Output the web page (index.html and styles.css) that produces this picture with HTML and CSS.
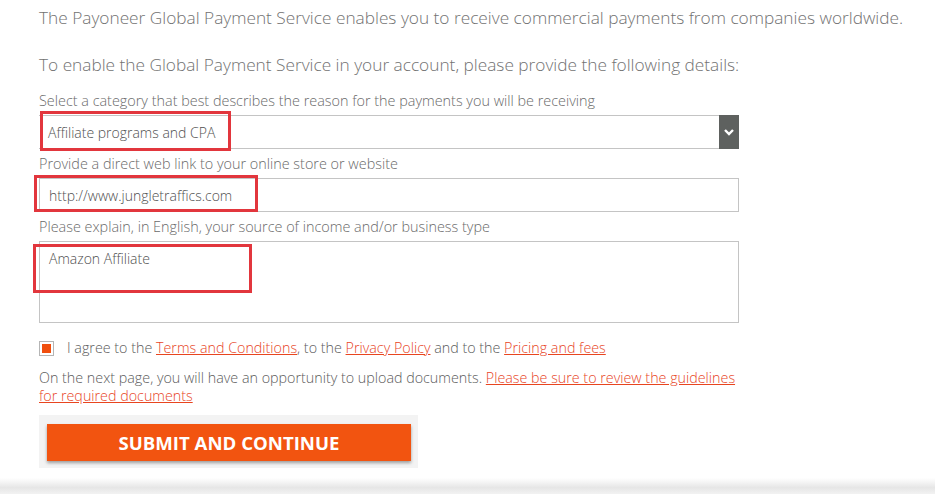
FILE: index.html
```html
<!DOCTYPE html>
<html lang="en">
<head>
  <meta charset="UTF-8">
  <title>Global Payment Service</title>
  <link rel="stylesheet" href="styles.css">
</head>
<body>
  <div class="page">
    <p class="lead">The Payoneer Global Payment Service enables you to receive commercial payments from companies worldwide.</p>
    <p class="lead second">To enable the Global Payment Service in your account, please provide the following details:</p>

    <form class="form">
      <label class="label">Select a category that best describes the reason for the payments you will be receiving</label>
      <div class="field select">
        <span class="value">Affiliate programs and CPA</span>
        <span class="arrow">
          <svg width="10" height="8" viewBox="0 0 10 8"><path d="M1 2 L5 6 L9 2" fill="none" stroke="#fff" stroke-width="2.4"/></svg>
        </span>
        <span class="mark mark-select"></span>
      </div>

      <label class="label">Provide a direct web link to your online store or website</label>
      <div class="field">
        <span class="value">http://www.jungletraffics.com</span>
        <span class="mark mark-link"></span>
      </div>

      <label class="label">Please explain, in English, your source of income and/or business type</label>
      <div class="field area">
        <span class="value">Amazon Affiliate</span>
        <span class="mark mark-area"></span>
      </div>

      <div class="agree">
        <span class="check"><span class="tick"></span></span>
        <span>I agree to the <a href="#">Terms and Conditions</a>, to the <a href="#">Privacy Policy</a> and to the <a href="#">Pricing and fees</a></span>
      </div>

      <p class="note">On the next page, you will have an opportunity to upload documents. <a href="#">Please be sure to review the guidelines</a><br><a href="#">for required documents</a></p>

      <div class="submit-wrap">
        <button type="button" class="submit">SUBMIT AND CONTINUE</button>
      </div>
    </form>
  </div>
  <div class="bottom-shade"></div>
</body>
</html>
```

FILE: styles.css
```css
body {
  margin: 0;
  background: #fff;
  font-family: "Open Sans", Arial, sans-serif;
  color: #777;
}
.page {
  padding: 4px 0 0 39px;
  width: 890px;
}
.lead {
  margin: 0;
  font-size: 17.25px;
  font-weight: 300;
  color: #727272;
  line-height: 28px;
  white-space: nowrap;
}
.lead.second {
  margin-top: 19px;
}
.form {
  width: 700px;
  margin-top: 13px;
}
.label {
  display: block;
  font-size: 14.4px;
  font-weight: 300;
  color: #6a6a6a;
  line-height: 18px;
  margin-bottom: 5px;
  white-space: nowrap;
}
.field {
  position: relative;
  box-sizing: border-box;
  height: 34px;
  border: 1px solid #c4c4c4;
  padding: 7px 0 0 9px;
  font-size: 14px;
  font-weight: 300;
  color: #505050;
  margin-bottom: 6px;
}
.select {
  border-left: none;
  border-right: none;
}
.arrow {
  position: absolute;
  right: 0;
  top: -1px;
  bottom: -1px;
  width: 20px;
  background: #5e615f;
  display: flex;
  align-items: center;
  justify-content: center;
}
.area {
  height: 82px;
}
.mark {
  position: absolute;
  border: 3px solid #e2363d;
}
.mark-select {
  left: 1px;
  top: -5px;
  width: 185px;
  height: 34px;
}
.mark-link {
  left: -6px;
  top: -4px;
  width: 218px;
  height: 31px;
}
.mark-area {
  left: -7px;
  top: 2px;
  width: 213px;
  height: 43px;
}
.agree {
  display: flex;
  align-items: center;
  margin-top: 15px;
  font-size: 14.3px;
  font-weight: 300;
  line-height: 20px;
  color: #5c5c5c;
}
.check {
  box-sizing: border-box;
  width: 15px;
  height: 15px;
  border: 1px solid #b5b5b5;
  display: flex;
  align-items: center;
  justify-content: center;
  margin-right: 13px;
  flex: none;
}
.tick {
  width: 9px;
  height: 9px;
  background: #f04e0e;
}
a {
  color: #e8451f;
  text-decoration: underline;
}
.note {
  margin: 11px 0 0;
  font-size: 14.3px;
  font-weight: 300;
  line-height: 18px;
  color: #5c5c5c;
}
.submit-wrap {
  display: inline-block;
  margin-top: 10px;
  padding: 9px 7px 7px 8px;
  background: #f3f3f3;
}
.submit {
  display: block;
  width: 364px;
  height: 37px;
  border: none;
  background: #f25410;
  color: #fff;
  font-family: "Open Sans", Arial, sans-serif;
  font-weight: 700;
  font-size: 18.6px;
  box-shadow: 0 2px 3px rgba(0, 0, 0, 0.35);
}
.bottom-shade {
  position: fixed;
  left: 0;
  right: 0;
  bottom: 0;
  height: 16px;
  background: linear-gradient(#fff, #e6e6e6 60%, #f2f2f2);
}
```
